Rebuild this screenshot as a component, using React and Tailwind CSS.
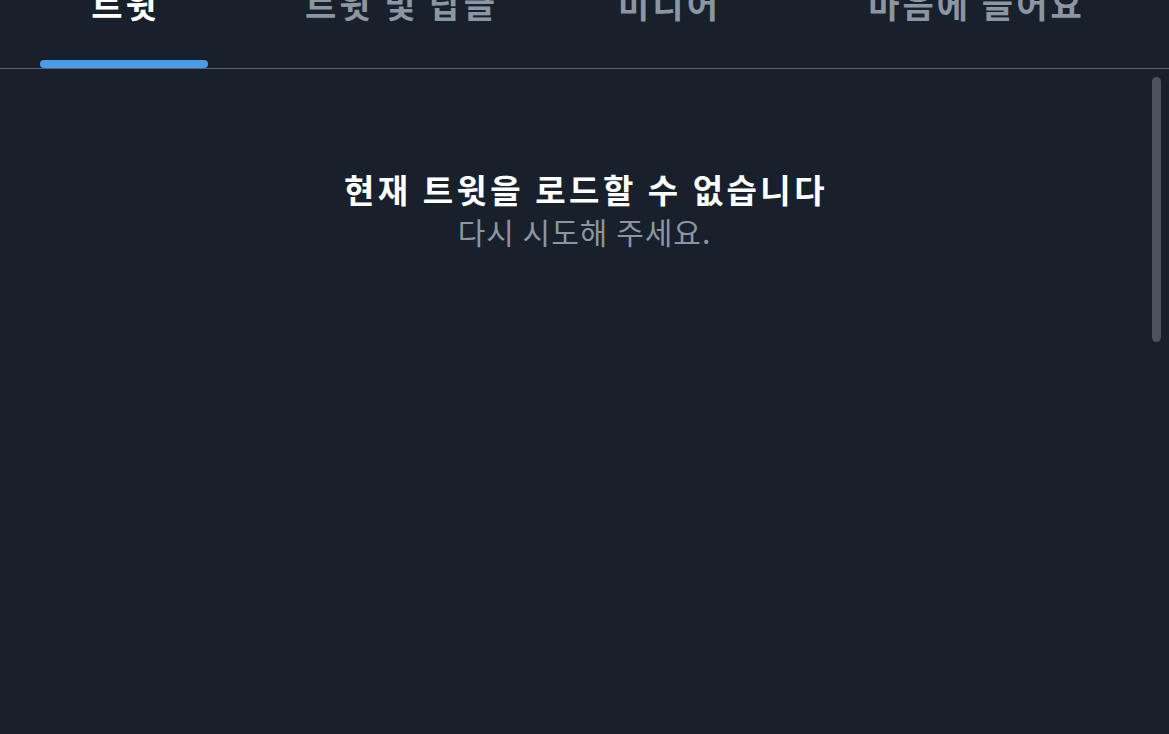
const tabs = [
  { label: "트윗", width: "w-[248px]", active: true },
  { label: "트윗 및 답글", width: "w-[304px]" },
  { label: "미디어", width: "w-[232px]" },
  { label: "마음에 들어요", width: "w-[382px]" },
];

export default function App() {
  return (
    <div
      className="relative h-screen w-full overflow-hidden bg-[#18202b]"
      style={{ fontFamily: '"Noto Sans CJK KR", "Noto Sans", sans-serif' }}
    >
      <div className="flex h-[69px] border-b border-[#5d6670]">
        {tabs.map((tab) => (
          <div
            key={tab.label}
            className={`flex ${tab.width} flex-col items-center justify-between`}
          >
            <span
              className={`-mt-[13px] pl-[3px] text-[34px] font-bold leading-none tracking-[3px] ${
                tab.active ? "text-white" : "text-[#8b96a2]"
              }`}
            >
              {tab.label}
            </span>
            {tab.active && (
              <div className="h-[8px] w-[168px] rounded-full bg-[#4b9be8]" />
            )}
          </div>
        ))}
      </div>

      <div className="flex flex-col items-center pt-[98px]">
        <h1 className="pl-[3px] text-[33px] font-bold leading-[44px] tracking-[3.5px] text-white">
          현재 트윗을 로드할 수 없습니다
        </h1>
        <p className="text-[30px] leading-[40px] tracking-[1px] text-[#8b96a2]">
          다시 시도해 주세요.
        </p>
      </div>

      <div className="absolute right-[8px] top-[77px] h-[265px] w-[9px] rounded-full bg-[#4a525e]" />
    </div>
  );
}
